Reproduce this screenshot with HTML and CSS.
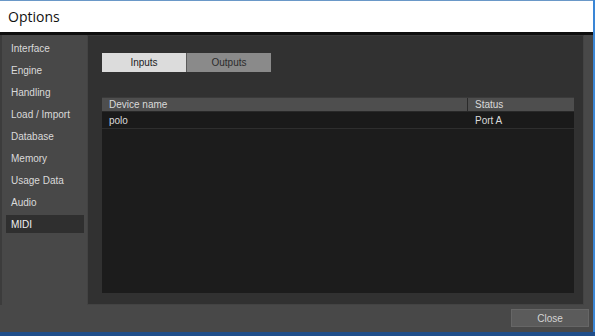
FILE: index.html
```html
<!DOCTYPE html>
<html lang="en">

<head>
    <meta charset="UTF-8">
    <meta name="viewport" content="width=device-width, initial-scale=1.0">
    <title>Options</title>
    <link rel="stylesheet" href="styles.css">
</head>

<body>
    <div class="window">
        <div class="titlebar">Options</div>
        <div class="content">
            <div class="middle">
                <ul class="sidebar">
                    <li>Interface</li>
                    <li>Engine</li>
                    <li>Handling</li>
                    <li>Load / Import</li>
                    <li>Database</li>
                    <li>Memory</li>
                    <li>Usage Data</li>
                    <li>Audio</li>
                    <li class="active">MIDI</li>
                </ul>
                <div class="panel">
                    <div class="tabs">
                        <a class="tab active">Inputs</a>
                        <a class="tab">Outputs</a>
                    </div>
                    <div class="devices">
                        <div class="row head">
                            <span class="name">Device name</span>
                            <span class="status">Status</span>
                        </div>
                        <div class="row">
                            <span class="name">polo</span>
                            <span class="status">Port A</span>
                        </div>
                    </div>
                </div>
            </div>
            <div class="footer">
                <a class="close-btn">Close</a>
            </div>
        </div>
    </div>
</body>

</html>
```

FILE: styles.css
```css
html, body {
    margin: 0;
    padding: 0;
    background: #1f4e8a;
}

.window {
    width: 593px;
    height: 332px;
    border-right: 2px solid #3a86d6;
    display: flex;
    flex-direction: column;
    background: #484848;
}

.titlebar {
    height: 31px;
    border-top: 1px solid #6a98c8;
    background: #fff;
    font-family: "Open Sans", "Liberation Sans", sans-serif;
    font-size: 14px;
    color: #111;
    padding-left: 8px;
    line-height: 31px;
}

.content {
    flex: 1;
    border-top: 3px solid #0e0e0e;
    display: flex;
    flex-direction: column;
    font-family: "Liberation Sans", Arial, sans-serif;
    font-size: 10px;
    color: #dadada;
}

.middle {
    display: flex;
    height: 270px;
}

.sidebar {
    list-style: none;
    margin: 0;
    padding: 4px 0 0 4px;
    border-left: 2px solid #3c3c3c;
    box-sizing: border-box;
    width: 87px;
}

.sidebar li {
    height: 18px;
    line-height: 19px;
    margin-bottom: 4px;
    padding-left: 5px;
    width: 78px;
    box-sizing: border-box;
}

.sidebar li.active {
    background: #2f2f2f;
    color: #f0f0f0;
}

.panel {
    width: 497px;
    background: #313131;
    border: 1px solid #434343;
    border-top-color: #3a3a3a;
    box-sizing: border-box;
    padding: 17px 10px 11px 14px;
    display: flex;
    flex-direction: column;
}

.tabs {
    display: flex;
    height: 19px;
}

.tab {
    width: 84px;
    text-align: center;
    line-height: 20px;
    background: #8a8a8a;
    color: #2c2c2c;
    border-left: 1px solid #5a5a5a;
}

.tab.active {
    background: #dcdcdc;
    color: #222;
    border-left: none;
}

.devices {
    margin-top: 25px;
    flex: 1;
    background: #1c1c1c;
    border-top: 1px solid #3a3a3a;
    width: 472px;
}

.row {
    display: flex;
    height: 16px;
    line-height: 18px;
    background: #1a1a1a;
    border-bottom: 1px solid #2e2e2e;
}

.row.head {
    height: 13px;
    line-height: 14px;
    background: #4e4e4e;
    border-bottom: 1px solid #282828;
}

.name {
    width: 358px;
    padding-left: 7px;
}

.status {
    padding-left: 7px;
    border-left: 1px solid transparent;
}

.head .status {
    border-left-color: #2a2a2a;
}

.footer {
    flex: 1;
    display: flex;
    justify-content: flex-end;
    align-items: flex-start;
    padding: 4px 4px 0 0;
}

.close-btn {
    width: 76px;
    height: 16px;
    line-height: 17px;
    text-align: center;
    background: #5b5b5b;
    border: 1px solid #666;
    color: #d4d4d4;
}
```
